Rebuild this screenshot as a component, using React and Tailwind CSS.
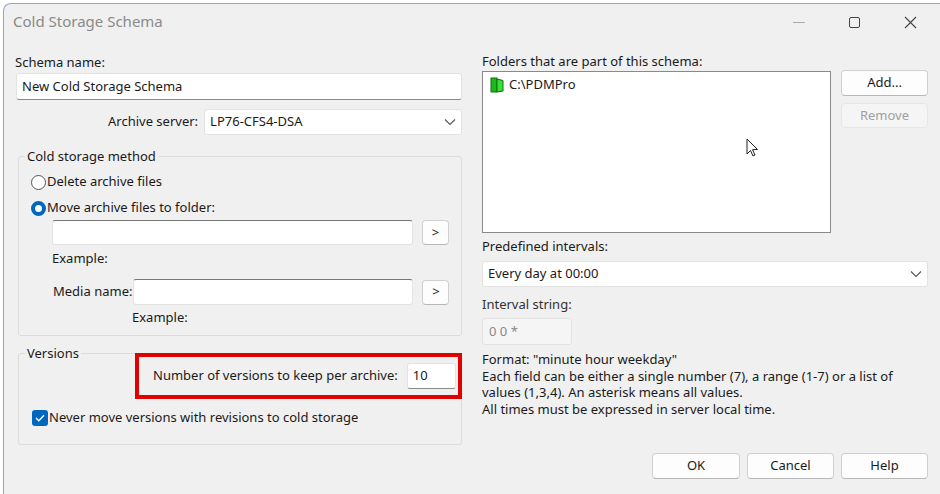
import React from 'react';

const Btn = ({ children, disabled, className = '' }) => (
    <div className={`flex items-center justify-center rounded border ${disabled ? 'border-[#e6e6e6] bg-[#f5f5f5] text-[#a0a0a0]' : 'border-[#d0d0d0] border-b-[#b8b8b8] bg-[#fdfdfd] text-[#1a1a1a]'} ${className}`}>{children}</div>
);

const Field = ({ className = '', children }) => (
    <div className={`flex items-center bg-white border border-[#e3e3e3] border-b-[#8a8a8a] rounded-[3px] px-[5px] ${className}`}>{children}</div>
);

const Chevron = () => (
    <svg width="12" height="8" viewBox="0 0 12 8" className="ml-auto"><path d="M1 1.5 L6 6.5 L11 1.5" fill="none" stroke="#555" strokeWidth="1.1" /></svg>
);

export default function App() {
    return (
        <div className="w-[940px] h-[494px] bg-white overflow-hidden" style={{ fontFamily: '"Noto Sans", "Open Sans", sans-serif' }}>
            <div className="mt-[3px] ml-[3px] h-[491px] bg-[#f0f0f0] rounded-tl-lg border-l border-t border-[#8fa8c8] text-[13px] text-[#1a1a1a] flex flex-col">
                <div className="h-[37px] flex items-center pl-[9px] text-[15px] text-[#8a8a8a]">
                    <span className="-mt-[3px]">Cold Storage Schema</span>
                    <div className="ml-auto flex items-center gap-[44px] pr-[23px] text-[#555]">
                        <span className="w-[12px] h-px bg-[#aaa]"></span>
                        <span className="w-[11px] h-[11px] border border-[#444] rounded-[2px]"></span>
                        <svg width="13" height="13" viewBox="0 0 13 13"><path d="M1 1 L12 12 M12 1 L1 12" stroke="#444" strokeWidth="1.1" /></svg>
                    </div>
                </div>
                <div className="flex pl-[11px] gap-[20px]">
                    {/* left */}
                    <div className="w-[447px] flex flex-col">
                        <div className="leading-[18px] mt-[12px]">Schema name:</div>
                        <Field className="mt-[2px] h-[27px] ml-px">New Cold Storage Schema</Field>
                        <div className="flex items-center mt-[9px] h-[26px]">
                            <span className="ml-[93px] mr-[6px]">Archive server:</span>
                            <Field className="flex-1 h-[26px] border-b-[#e3e3e3]">LP76-CFS4-DSA<Chevron /></Field>
                        </div>
                        <div className="relative mt-[21px] h-[180px] ml-[3px] border border-[#dcdcdc] rounded-[3px]">
                            <span className="absolute -top-[10px] left-[6px] px-[2px] bg-[#f0f0f0] leading-[18px]">Cold storage method</span>
                            <div className="flex flex-col pl-[12px] pt-[15px]">
                                <div className="flex items-center h-[20px]"><span className="w-[15px] h-[15px] rounded-full border border-[#555] bg-white mr-px"></span>Delete archive files</div>
                                <div className="flex items-center h-[20px] mt-[6px]"><span className="w-[15px] h-[15px] rounded-full border-[4px] border-[#0067c0] bg-white mr-px"></span>Move archive files to folder:</div>
                                <div className="flex items-center mt-[2px] ml-[21px]">
                                    <Field className="w-[361px] h-[25px] border-t-[#777] border-b-[#e3e3e3]"></Field>
                                    <Btn className="ml-[9px] w-[27px] h-[25px]">&gt;</Btn>
                                </div>
                                <div className="ml-[21px] mt-[4px] leading-[18px]">Example:</div>
                                <div className="flex items-center mt-[12px] ml-[22px]">
                                    <span className="mr-px">Media name:</span>
                                    <Field className="w-[280px] h-[26px] border-t-[#777] border-b-[#e3e3e3]"></Field>
                                    <Btn className="ml-[9px] w-[27px] h-[25px]">&gt;</Btn>
                                </div>
                                <div className="ml-[101px] mt-[3px] leading-[18px]">Example:</div>
                            </div>
                        </div>
                        <div className="relative mt-[17px] h-[92px] ml-[3px] border border-[#dcdcdc] rounded-[3px]">
                            <span className="absolute -top-[10px] left-[6px] px-[2px] bg-[#f0f0f0] leading-[18px]">Versions</span>
                            <div className="flex flex-col">
                                <div className="ml-auto -mr-px -mt-px w-[327px] h-[46px] border-[4px] border-[#e00000] flex items-center pl-[14px]">
                                    <span>Number of versions to keep per archive:</span>
                                    <Field className="ml-[9px] w-[49px] h-[26px] border-b-[#8a8a8a]">10</Field>
                                </div>
                                <div className="flex items-center ml-[13px] mt-[9px]">
                                    <span className="w-[16px] h-[16px] rounded-[3px] bg-[#0067c0] flex items-center justify-center mr-px">
                                        <svg width="10" height="8" viewBox="0 0 10 8"><path d="M1 4 L3.8 6.8 L9 1.2" fill="none" stroke="white" strokeWidth="1.3" /></svg>
                                    </span>
                                    Never move versions with revisions to cold storage
                                </div>
                            </div>
                        </div>
                    </div>
                    {/* right */}
                    <div className="w-[446px] flex flex-col">
                        <div className="leading-[18px] mt-[11px]">Folders that are part of this schema:</div>
                        <div className="flex gap-[10px]">
                            <div className="w-[349px] h-[162px] bg-white border border-[#8a8a8a] mt-px relative">
                                <div className="flex items-center pl-[7px] pt-[3px]">
                                    <svg width="15" height="16" viewBox="0 0 15 16" className="mr-[4px]">
                                        <rect x="1" y="1" width="6" height="14" fill="#1db81d" stroke="#0f6f0f" />
                                        <path d="M7 2 L13 3.5 L13 14 L7 15 Z" fill="#36e036" stroke="#0f6f0f" />
                                    </svg>
                                    C:\PDMPro
                                </div>
                                <svg className="absolute left-[263px] top-[66px]" width="14" height="20" viewBox="0 0 14 20"><path d="M1 1 L1 16 L4.5 12.5 L7 18 L9 17 L6.5 11.7 L11.5 11.5 Z" fill="white" stroke="#222" strokeWidth="1" /></svg>
                            </div>
                            <div className="flex flex-col gap-[7px]">
                                <Btn className="w-[87px] h-[26px]">Add...</Btn>
                                <Btn disabled className="w-[87px] h-[25px]">Remove</Btn>
                            </div>
                        </div>
                        <div className="mt-[4px] leading-[18px]">Predefined intervals:</div>
                        <Field className="mt-[6px] h-[26px] border-b-[#e3e3e3]">Every day at 00:00<Chevron /></Field>
                        <div className="mt-[8px] leading-[18px] text-[#333]">Interval string:</div>
                        <div className="mt-[5px] w-[90px] h-[27px] bg-[#f5f5f5] border border-[#e3e3e3] rounded-[3px] flex items-center px-[6px] text-[#888]">0 0 *</div>
                        <div className="mt-[6px] leading-[16.5px]">
                            <div>Format: "minute hour weekday"</div>
                            <div>Each field can be either a single number (7), a range (1-7) or a list of values (1,3,4). An asterisk means all values.</div>
                            <div>All times must be expressed in server local time.</div>
                        </div>
                        <div className="flex justify-end gap-[7px] mt-[36px]">
                            <Btn className="w-[88px] h-[26px]">OK</Btn>
                            <Btn className="w-[87px] h-[26px]">Cancel</Btn>
                            <Btn className="w-[87px] h-[26px]">Help</Btn>
                        </div>
                    </div>
                </div>
            </div>
        </div>
    );
}
